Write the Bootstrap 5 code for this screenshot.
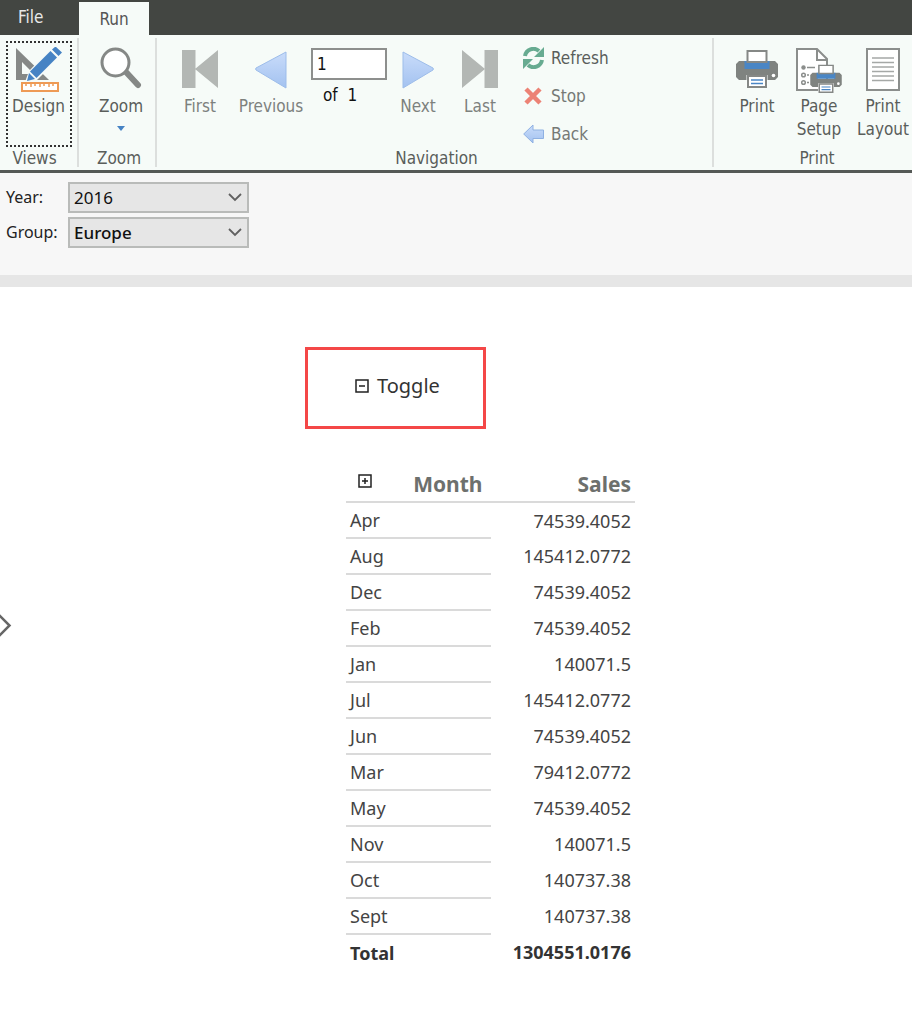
<!DOCTYPE html>
<html lang="en">
<head>
<meta charset="utf-8">
<meta name="viewport" content="width=device-width, initial-scale=1">
<title>Report Builder</title>
<link href="https://cdn.jsdelivr.net/npm/bootstrap@5.3.0/dist/css/bootstrap.min.css" rel="stylesheet">
<style>
  body { font-family: "Noto Sans", "Open Sans", sans-serif; background: #fff; color: #333; overflow-x: hidden; }
  .tabs { background: #434642; height: 35px; font: 17px/32px "DejaVu Sans Condensed", "DejaVu Sans", sans-serif; }
  .tabs .nav-link { color: #e8e8e8; border-radius: 0; padding: 0 18px; height: 33px; line-height: 30px; font-size: 17px; }
  .tabs .nav-link.active { background: #f6fbf8; color: #555; margin-left: 18px; padding: 0 20px; line-height: 34px; }
  .ribbon { background: #f6fbf8; border-bottom: 3px solid #555956; height: 138px; font: 17px/23px "DejaVu Sans Condensed", "DejaVu Sans", sans-serif; color: #5a5e5b; overflow: hidden; padding-top: 3px; }
  .ribbon-group { border-right: 2px solid #dcdfdd; height: 129px; padding-top: 3px; flex: none; display: flex; flex-direction: column; align-items: center; }
  .ribbon-group:last-child { border-right: 0; flex: 1 1 0; min-width: 0; }
  .group-views { width: 79px; }
  .group-zoom { width: 78px; }
  .group-nav { width: 557px; }
  .group-tools { height: 106px; width: 100%; padding-left: 12px; display: flex; align-items: flex-start; }
  .group-title { line-height: 23px; margin-top: auto; margin-bottom: -2px; }
  .tool { border: 1px solid transparent; border-radius: 0; padding: 5px 0 0; color: inherit; font: inherit; background: none; height: 106px; flex: none; display: flex; flex-direction: column; align-items: center; white-space: nowrap; width: 62px; }
  .tool:disabled { border-color: transparent; color: #7d817e; opacity: 1; }
  .tool svg { height: 46px; margin-bottom: 2px; flex: none; }
  .tool .drop-arrow { height: 5px; }
  .tool.focused { border: 2px dotted #333; padding-top: 4px; }
  .tool.w-m { width: 66px; } .tool.w-l { width: 80px; }
  .page-field { width: 76px; padding-top: 7px; color: #111; }
  .page-box { width: 76px; height: 32px; border: 2px solid #8d8f8d; border-radius: 0; padding: 0 4px; font: inherit; color: #111; }
  .side-list { margin: -2px 0 0 12px; }
  .side { border: 0; background: none; padding: 0; color: inherit; height: 38px; font: inherit; display: flex; align-items: center; gap: 7px; }
  .side:disabled { color: #757976; }
  .params { background: #f7f7f7; border-bottom: 12px solid #e6e6e6; padding: 9px 6px 27px; font-size: 16px; color: #222; }
  .params label { width: 62px; line-height: 31px; }
  .params .form-select { width: 181px; height: 31px; border: 2px solid #b9bbb9; border-radius: 0; padding: 0 30px 0 4px; font-size: 17px; line-height: 27px; color: #111; background-color: #e6e6e6; background-size: 14px 9px; background-position: right 5px center;
    background-image: url("data:image/svg+xml,%3Csvg xmlns='http://www.w3.org/2000/svg' viewBox='0 0 14 9'%3E%3Cpath d='M1 1l6 6 6-6' fill='none' stroke='%23606060' stroke-width='1.8'/%3E%3C/svg%3E"); }
  .report { padding: 60px 0 50px 305px; }
  .toggle-box { width: 181px; height: 82px; border: 3px solid #f44747; padding: 0 0 4px 47px; color: #333; font-size: 20px; }
  .expander { border: 0; background: none; padding: 0; line-height: 0; }
  .sales { width: 289px; margin: 37px 0 0 41px; font-size: 18px; line-height: 24px; color: #444; border-collapse: collapse; table-layout: fixed; }
  .sales td, .sales th { height: 36px; padding: 0 4px; vertical-align: middle; }
  .sales thead th { font-size: 21px; color: #6d706d; border-bottom: 2px solid #dadada; }
  .sales thead .expander { padding: 2px 0 0 4px; }
  .sales tbody td:first-child { border-bottom: 2px solid #dadada; }
  .sales tfoot { color: #333; }
  .pane-handle { position: absolute; left: 0; top: 614px; border: 0; background: none; padding: 0; line-height: 0; }
</style>
</head>
<body>
<nav class="tabs nav align-items-end" aria-label="Ribbon tabs">
  <a class="nav-link" href="#">File</a>
  <a class="nav-link active" href="#" aria-current="page">Run</a>
</nav>

<svg width="0" height="0" class="position-absolute" aria-hidden="true">
  <defs>
    <linearGradient id="blue" x1="0" y1="0" x2="0" y2="1"><stop offset="0" stop-color="#c9dcfa"/><stop offset="1" stop-color="#a3c2f0"/></linearGradient>
    <symbol id="printer" viewBox="0 0 42 38">
      <path d="M3 11h7v8h22v-8h7l3 3v13l-3 3H3l-3-3V14z" fill="#7f8380"/>
      <path d="M8.500 11h25v8h-25z" fill="#4a86c5"/>
      <path d="M11.500 1h19v11h-19z" fill="#fff" stroke="#858886" stroke-width="2"/>
      <path d="M10.500 25h21v12h-21z" fill="#fff"/>
      <path d="M12 26h18v11H12z" fill="#fff" stroke="#858886" stroke-width="2"/>
      <path d="M15 30h12M15 33.500h12" stroke="#4a86c5" stroke-width="1.600"/>
      <circle cx="37.500" cy="25.500" r="1.800" fill="#fff"/>
    </symbol>
  </defs>
</svg>

<header class="ribbon d-flex">
  <section class="ribbon-group group-views">
    <button class="tool focused w-m" type="button">
      <svg width="46" viewBox="0 0 46 46">
        <path d="M0 1l33 32H0zM6 15v12h12z" fill="#858886" fill-rule="evenodd"/>
        <path d="M9 35l4-11L38-2l9 9-26 26z" fill="#f6fbf8"/>
        <path d="M34.500 4l6.500 6.500L20.500 31 14 24.500z" fill="#4683c4"/>
        <path d="M36 2.500l3.500-3L46 5.500 42.500 9zM13 26l6 6-8 2z" fill="#4683c4"/>
        <path d="M6 36h36v8H6z" fill="#fff" stroke="#ee9a55" stroke-width="2"/>
        <path d="M10 36v3M15 36v4M19 36v3M24 36v4M28 36v3M33 36v4M37 36v3" stroke="#ee9a55" stroke-width="1.500"/>
      </svg>
      <span>Design</span>
    </button>
    <div class="group-title pe-2">Views</div>
  </section>

  <section class="ribbon-group group-zoom">
    <button class="tool w-m ms-2" type="button">
      <svg width="42" viewBox="0 0 42 46">
        <path d="M26 25l12 13" stroke="#858886" stroke-width="6" stroke-linecap="round"/>
        <circle cx="15.500" cy="15.500" r="13.500" fill="#fff" stroke="#858886" stroke-width="3"/>
      </svg>
      <span>Zoom</span>
      <svg width="8" viewBox="0 0 8 5" class="drop-arrow mt-2"><path d="M0 0h8L4 5z" fill="#4683c4"/></svg>
    </button>
    <div class="group-title ps-1">Zoom</div>
  </section>

  <section class="ribbon-group group-nav">
    <div class="group-tools">
      <button class="tool" type="button" disabled>
        <svg width="36" viewBox="0 0 36 46"><path d="M0 3h13.500v38H0zM36 3v38L13 22z" fill="#b3b7b4"/></svg>
        <span>First</span>
      </button>
      <button class="tool w-l" type="button" disabled>
        <svg width="32" viewBox="0 0 32 46"><path d="M31 5v36L1 23q-.8-1 0-2z" fill="url(#blue)" stroke="#9dbdea"/></svg>
        <span>Previous</span>
      </button>
      <div class="page-field">
        <input class="page-box d-block" type="text" value="1" aria-label="Page number">
        <div class="ps-2 pt-1 ms-1">of&nbsp; 1</div>
      </div>
      <button class="tool" type="button" disabled>
        <svg width="32" viewBox="0 0 32 46"><path d="M1 5v36l30-18q.8-1 0-2z" fill="url(#blue)" stroke="#9dbdea"/></svg>
        <span>Next</span>
      </button>
      <button class="tool" type="button" disabled>
        <svg width="36" viewBox="0 0 36 46"><path d="M22.500 3H36v38H22.500zM0 3v38l23-19z" fill="#b3b7b4"/></svg>
        <span>Last</span>
      </button>
      <div class="side-list">
        <button class="side" type="button">
          <svg width="21" height="22" viewBox="0 0 21 22"><path d="M2 9a8.500 8.500 0 0 1 14-5M19 13a8.500 8.500 0 0 1-14 5" fill="none" stroke="#67ab91" stroke-width="4"/><path d="M21 0v10H11zM0 22V12h10z" fill="#67ab91"/></svg>
          Refresh
        </button>
        <button class="side" type="button" disabled>
          <svg width="21" height="22" viewBox="0 0 21 22"><path d="M3 4l14 14M17 4L3 18" stroke="#ec8275" stroke-width="4.500"/></svg>
          Stop
        </button>
        <button class="side" type="button" disabled>
          <svg width="21" height="22" viewBox="0 0 21 22"><path d="M.7 11L10 2v5h10.500v8.500H10V20z" fill="url(#blue)" stroke="#8fb1e2"/></svg>
          Back
        </button>
      </div>
    </div>
    <div class="group-title ps-1">Navigation</div>
  </section>

  <section class="ribbon-group">
    <div class="group-tools">
      <button class="tool" type="button">
        <svg width="42" viewBox="0 0 42 46"><use href="#printer" y="3" width="42" height="38"/></svg>
        <span>Print</span>
      </button>
      <button class="tool" type="button">
        <svg width="46" viewBox="0 0 46 46">
          <path d="M1 2h20l10 10v31H1z" fill="#fff" stroke="#8b8e8c" stroke-width="2"/><path d="M21 2v11h10" fill="none" stroke="#8b8e8c" stroke-width="2"/>
          <circle cx="7.500" cy="20.500" r="2.200" fill="#8b8e8c"/><g fill="none" stroke="#8b8e8c" stroke-width="1.500"><circle cx="7.500" cy="28" r="1.800"/><circle cx="7.500" cy="35.500" r="1.800"/><path d="M11 20.500h8M11 28h2M11 35.500h2"/></g>
          <use href="#printer" x="14" y="17.500" width="32" height="28.500"/>
        </svg>
        <span>Page<br>Setup</span>
      </button>
      <button class="tool w-m" type="button">
        <svg width="36" viewBox="0 0 36 46"><path d="M2 2h32v41H2z" fill="#fff" stroke="#8b8e8c" stroke-width="2"/><path d="M7 11h22M7 15.500h22M7 20h22M7 24.500h22M7 29h22M7 33.500h22" stroke="#a5a8a6" stroke-width="1.500"/></svg>
        <span>Print<br>Layout</span>
      </button>
    </div>
    <div class="group-title ps-2">Print</div>
  </section>
</header>

<form class="params">
  <div class="d-flex mb-1"><label for="year">Year:</label><select id="year" class="form-select"><option>2016</option></select></div>
  <div class="d-flex"><label for="group">Group:</label><select id="group" class="form-select fw-medium"><option>Europe</option></select></div>
</form>

<main class="report">
  <div class="toggle-box d-flex align-items-center">
    <button class="expander me-2" type="button" aria-label="Collapse"><svg width="14" height="14" viewBox="0 0 14 14"><path d="M1 1h12v12H1zM4 7h6" fill="none" stroke="#222" stroke-width="1.500"/></svg></button>
    <span>Toggle</span>
  </div>
  <table class="sales">
    <thead><tr>
      <th><div class="d-flex justify-content-between align-items-start px-1"><button class="expander" type="button" aria-label="Expand"><svg width="14" height="14" viewBox="0 0 14 14"><path d="M1 1h12v12H1zM4 7h6M7 4v6" fill="none" stroke="#222" stroke-width="1.500"/></svg></button><span>Month</span></div></th>
      <th class="text-end">Sales</th>
    </tr></thead>
    <tbody>
      <tr><td>Apr</td><td class="text-end">74539.4052</td></tr>
      <tr><td>Aug</td><td class="text-end">145412.0772</td></tr>
      <tr><td>Dec</td><td class="text-end">74539.4052</td></tr>
      <tr><td>Feb</td><td class="text-end">74539.4052</td></tr>
      <tr><td>Jan</td><td class="text-end">140071.5</td></tr>
      <tr><td>Jul</td><td class="text-end">145412.0772</td></tr>
      <tr><td>Jun</td><td class="text-end">74539.4052</td></tr>
      <tr><td>Mar</td><td class="text-end">79412.0772</td></tr>
      <tr><td>May</td><td class="text-end">74539.4052</td></tr>
      <tr><td>Nov</td><td class="text-end">140071.5</td></tr>
      <tr><td>Oct</td><td class="text-end">140737.38</td></tr>
      <tr><td>Sept</td><td class="text-end">140737.38</td></tr>
    </tbody>
    <tfoot><tr><th>Total</th><th class="text-end">1304551.0176</th></tr></tfoot>
  </table>
</main>
<button class="pane-handle" type="button" aria-label="Show pane"><svg width="12" height="23" viewBox="0 0 12 23"><path d="M-1 1l10.500 10.500L-1 22" fill="none" stroke="#666" stroke-width="2.500"/></svg></button>
<script src="https://cdn.jsdelivr.net/npm/bootstrap@5.3.0/dist/js/bootstrap.bundle.min.js"></script>
</body>
</html>
